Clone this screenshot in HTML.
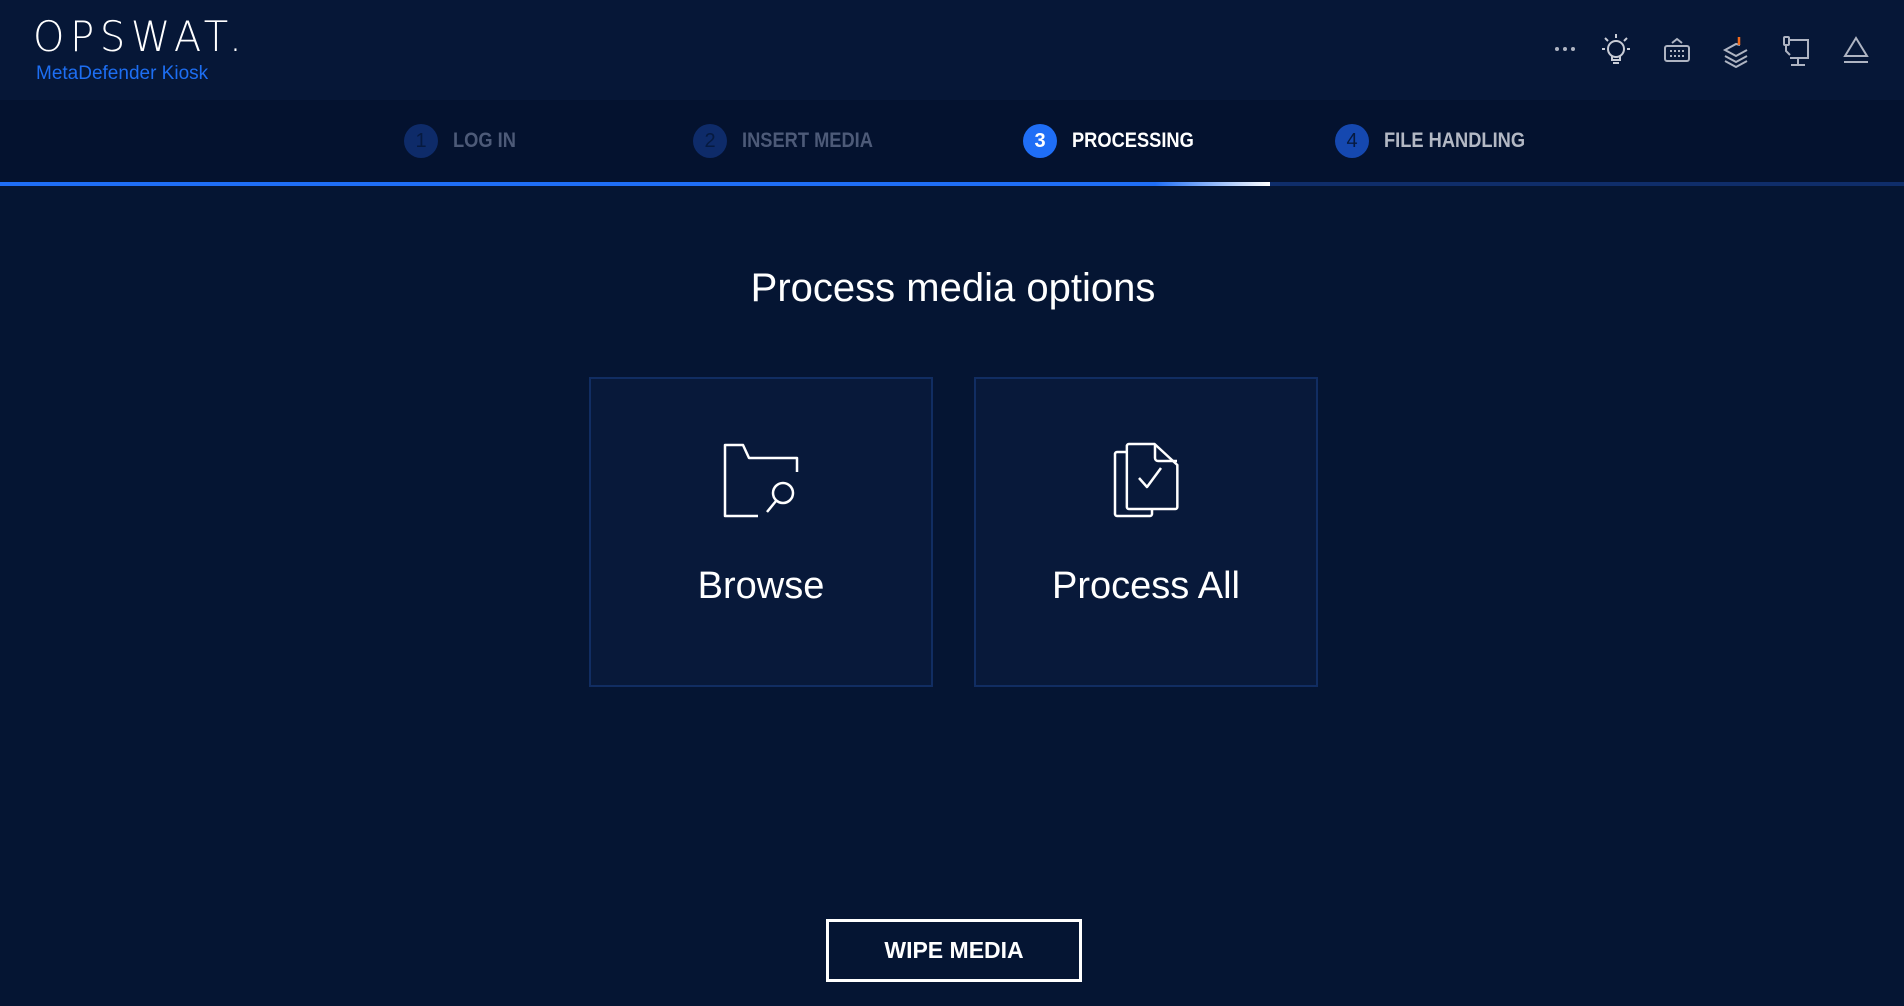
<!DOCTYPE html>
<html><head><meta charset="utf-8"><style>
*{margin:0;padding:0;box-sizing:border-box}
body{width:1904px;height:1006px;background:#051533;font-family:"Liberation Sans",sans-serif;position:relative;overflow:hidden;color:#fff}
.hdr{position:absolute;left:0;top:0;width:1904px;height:100px;background:#061737}
.logo{position:absolute;left:33px;top:12px;font-size:42px;letter-spacing:6px;color:#fff;font-family:"DejaVu Sans","Liberation Sans",sans-serif;font-weight:200;transform:scaleX(0.95);transform-origin:left}
.sub{position:absolute;left:36px;top:63px;font-size:19px;color:#1d6ef2}
.icons svg{position:absolute;top:34px}
.steps{position:absolute;left:0;top:100px;width:1904px;height:86px;background:#04122f}
.step{position:absolute;top:124px;height:34px;display:flex;align-items:center;font-weight:bold;font-size:21px}
.step b{display:inline-block;transform:scaleX(0.87);transform-origin:left;white-space:nowrap}
.c{width:34px;height:34px;border-radius:50%;display:flex;align-items:center;justify-content:center;margin-right:15px;font-weight:normal;font-size:20px}
.bar{position:absolute;top:182px;height:4px}
h1{position:absolute;left:0;width:1906px;top:266px;text-align:center;font-weight:normal;font-size:40px}
.card{position:absolute;top:377px;width:344px;height:310px;background:#08193a;border:2px solid #112d62}
.card span{position:absolute;left:0;right:0;top:186px;text-align:center;font-size:38px}
.card svg{position:absolute}
.btn{position:absolute;left:826px;top:919px;width:256px;height:63px;border:3px solid #fff;text-align:center;line-height:57px;font-weight:bold;font-size:23px}
</style></head><body>
<div class="hdr"></div>
<div class="logo">OPSWAT.</div>
<div class="sub">MetaDefender Kiosk</div>
<div class="icons">
<svg style="left:1554px" width="22" height="30" viewBox="0 0 22 30"><circle cx="3" cy="15" r="2" fill="#aeb4c2"/><circle cx="11" cy="15" r="2" fill="#aeb4c2"/><circle cx="19" cy="15" r="2" fill="#aeb4c2"/></svg>
<svg style="left:1601px" width="30" height="34" viewBox="0 0 30 34" fill="none" stroke="#c8ccd6" stroke-width="2"><circle cx="15" cy="15" r="8"/><path d="M11 22v4h8v-4M12 29h6M15 0v4M4 4l3 3M26 4l-3 3M1 15h3M26 15h3"/></svg>
<svg style="left:1663px" width="28" height="30" viewBox="0 0 28 30" fill="none" stroke="#aeb4c2" stroke-width="2"><path d="M9 9l5-4 5 4"/><rect x="2" y="12" width="24" height="15" rx="2"/><path d="M7 17h14M7 22h14" stroke-dasharray="2 2"/></svg>
<svg style="left:1722px" width="28" height="34" viewBox="0 0 28 34" fill="none" stroke="#aeb4c2" stroke-width="2"><path d="M18 11l-4-1-11 6 11 6 11-6M3 22l11 6 11-6M3 27l11 6 11-6"/><path d="M17 3v8" stroke="#f26b1d" stroke-width="2.5"/></svg>
<svg style="left:1782px" width="30" height="34" viewBox="0 0 30 34" fill="none" stroke="#aeb4c2" stroke-width="2"><rect x="2" y="3" width="5" height="8" rx="1"/><path d="M4 11v6l4 4M7 6h19v18H8M16 24v6M9 31h14"/></svg>
<svg style="left:1842px" width="28" height="34" viewBox="0 0 28 34" fill="none" stroke="#aeb4c2" stroke-width="2"><path d="M14 4L3 22h22z"/><path d="M2 28h24"/></svg>
</div>
<div class="steps"></div>
<div class="step" style="left:404px;color:#4d5a78"><div class="c" style="background:#0e2b69;color:#061a40">1</div><b>LOG IN</b></div>
<div class="step" style="left:693px;color:#4d5a78"><div class="c" style="background:#0e2b69;color:#061a40">2</div><b>INSERT MEDIA</b></div>
<div class="step" style="left:1023px;color:#fff"><div class="c" style="background:#1f6ef6;color:#fff;font-weight:bold">3</div><b>PROCESSING</b></div>
<div class="step" style="left:1335px;color:#b3b8c4"><div class="c" style="background:#1548b0;color:#061a40">4</div><b>FILE HANDLING</b></div>
<div class="bar" style="left:0;width:1155px;background:#1f6ef6"></div>
<div class="bar" style="left:1155px;width:115px;background:linear-gradient(90deg,#1f6ef6,#fff)"></div>
<div class="bar" style="left:1270px;width:634px;background:#0f2d6a"></div>
<h1>Process media options</h1>
<div class="card" style="left:589px">
<svg style="left:131px;top:63px" width="80" height="80" viewBox="0 0 80 80" fill="none" stroke="#fff" stroke-width="2.5" stroke-linejoin="round"><path d="M36 74H3V3h18l6 13h48v14"/><circle cx="61" cy="51" r="10"/><path d="M54 59l-9 11"/></svg>
<span>Browse</span></div>
<div class="card" style="left:974px">
<svg style="left:136px;top:63px" width="70" height="80" viewBox="0 0 70 80" fill="none" stroke="#fff" stroke-width="2.5" stroke-linejoin="round"><path d="M15 10H5a2 2 0 0 0-2 2v60a2 2 0 0 0 2 2h33a2 2 0 0 0 2-2v-5"/><path d="M15 4a2 2 0 0 1 2-2h26l23 21v42a2 2 0 0 1-2 2H17a2 2 0 0 1-2-2z" transform="scale(0.99 1)"/><path d="M43 2v14a3 3 0 0 0 3 3h19"/><path d="M27 36l8 9 14-19"/></svg>
<span>Process All</span></div>
<div class="btn">WIPE MEDIA</div>
</body></html>
